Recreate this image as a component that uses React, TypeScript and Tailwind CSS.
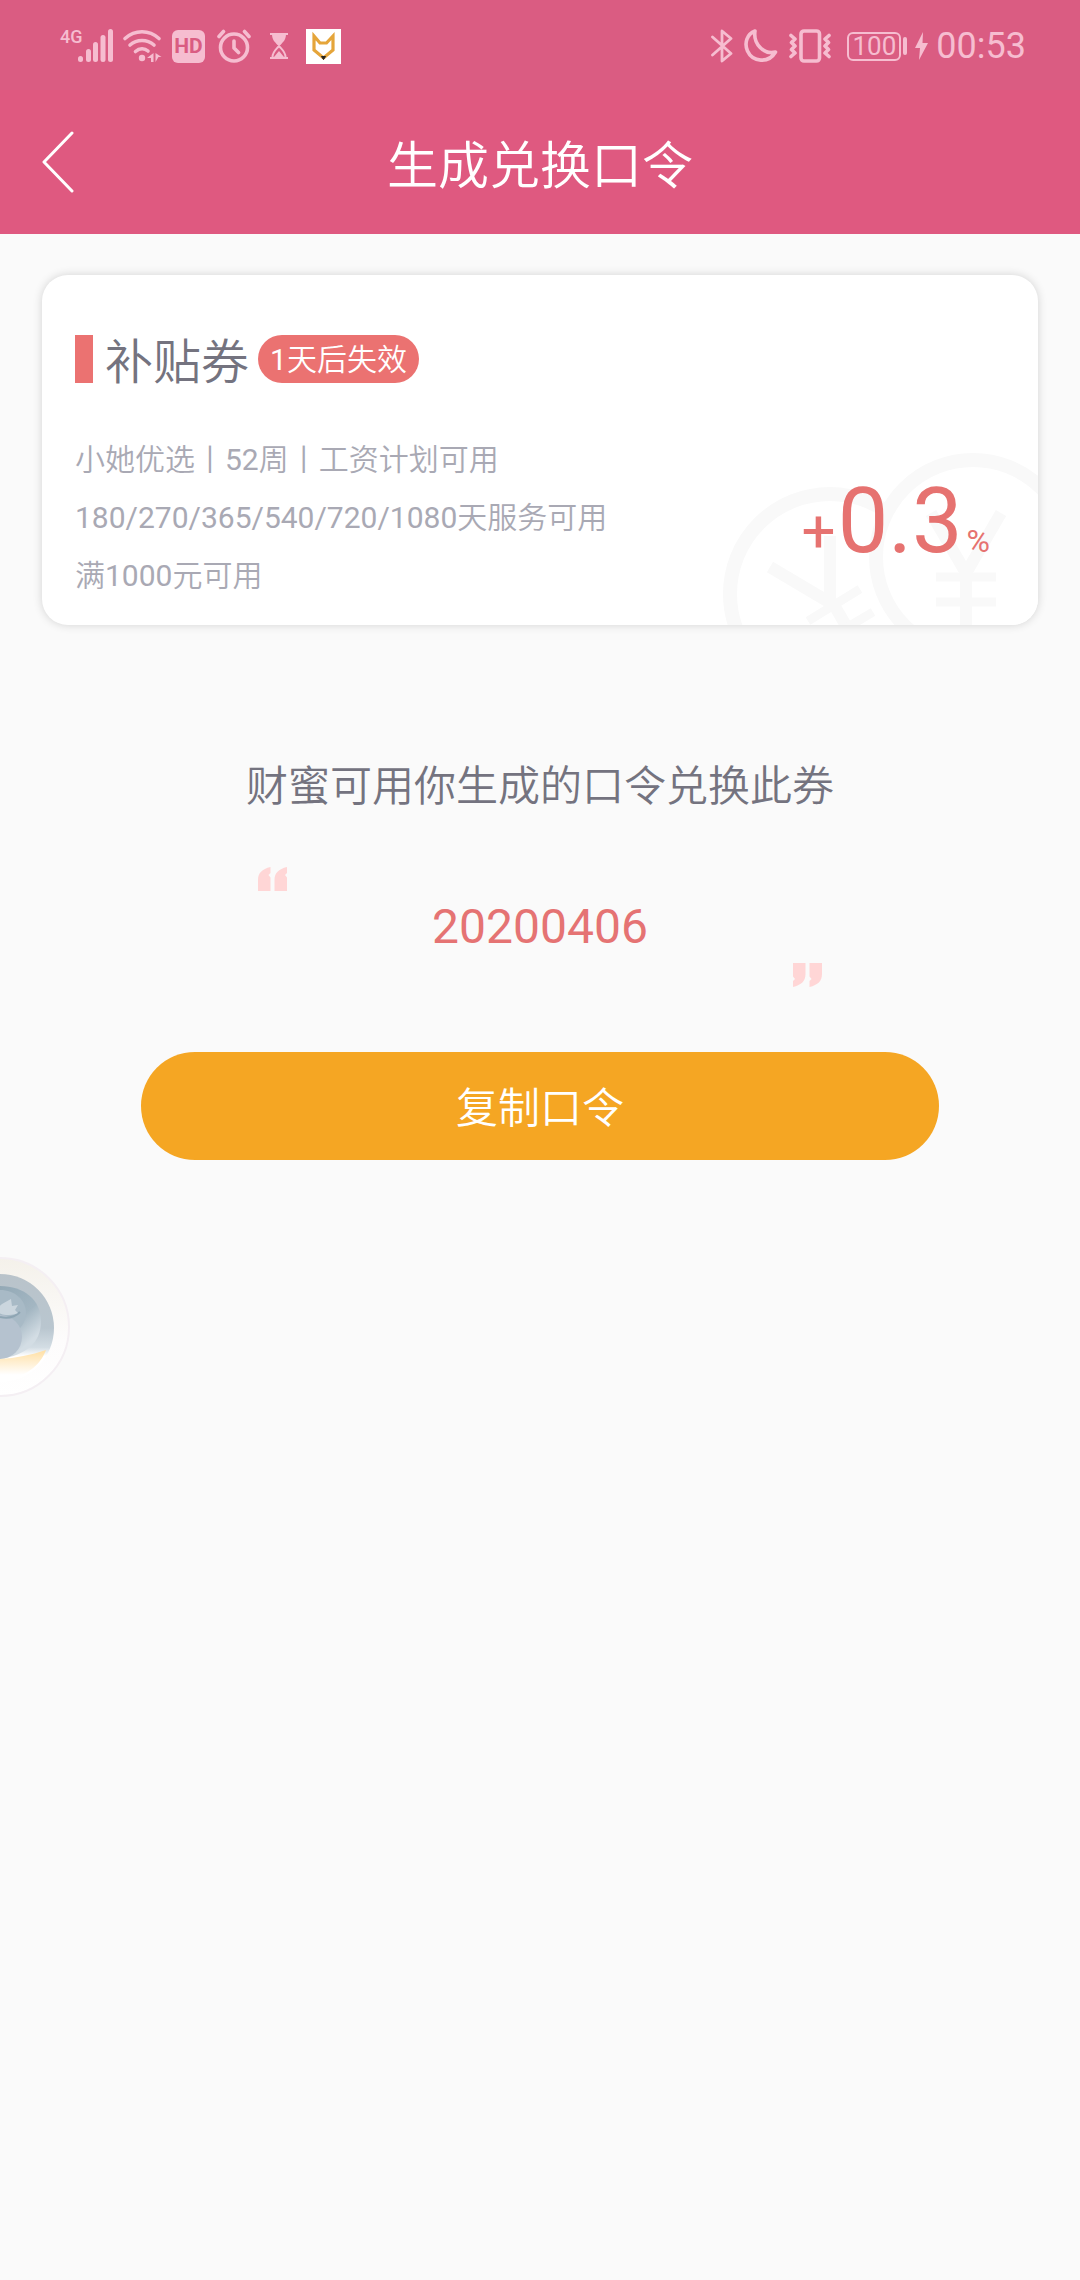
import React, { useState } from "react";

type Coupon = {
  title: string;
  expiry: string;
  rules: string[];
  rate: string;
  code: string;
};

const coupon: Coupon = {
  title: "补贴券",
  expiry: "1天后失效",
  rules: [
    "小她优选丨52周丨工资计划可用",
    "180/270/365/540/720/1080天服务可用",
    "满1000元可用",
  ],
  rate: "0.3",
  code: "20200406",
};

function StatusBar() {
  return (
    <div className="flex h-[90px] items-center justify-between bg-[#da5c82] pt-0.5 pr-[54px] pl-[60px] text-[#f6bdd0]">
      <div className="flex items-center">
        <div className="flex items-start">
          <span className="w-[18px] text-[18px] leading-4 font-medium">4G</span>
          <svg width="36" height="34" viewBox="0 0 36 34" fill="currentColor">
            <rect x="0" y="27" width="5" height="6" rx="2.5" />
            <rect x="8" y="20" width="5" height="13" rx="2.5" />
            <rect x="15" y="13" width="5" height="20" rx="2.5" />
            <rect x="22.500" y="6" width="5" height="27" rx="2.500" />
            <rect x="30" y="0" width="5" height="33" rx="2.5" />
          </svg>
        </div>
        <svg className="ml-2" width="40" height="34" viewBox="0 0 40 34" fill="none" stroke="currentColor" strokeWidth="3.6" strokeLinecap="round">
          <path d="M3 9.500C13 .5 27 .5 37 9.500" />
          <path d="M8 16c7-6 17-6 24 0" />
          <path d="M13.500 22.500c4-3.500 9-3.500 12.500-.5" />
          <circle cx="20" cy="29" r="3.2" fill="currentColor" stroke="none" />
          <path d="M31.500 24v9H29v-4h-4zM33.500 24l6 4h-3l-3 5z" fill="currentColor" stroke="none" />
        </svg>
        <span className="ml-2.5 flex h-[33px] w-[33px] items-center justify-center rounded-md bg-[#f6bdd0] text-[21px] leading-none font-bold text-[#da5c82]">
          HD
        </span>
        <svg className="ml-3" width="34" height="34" viewBox="0 0 34 34" fill="none" stroke="currentColor" strokeWidth="3.6" strokeLinecap="round" strokeLinejoin="round">
          <circle cx="17" cy="18.500" r="13.500" />
          <path d="M17 12v7l4.500 4.500M2 7.500l4.500-5M32 7.500l-4.500-5" />
        </svg>
        <svg className="ml-[18px]" width="20" height="26" viewBox="0 0 20 26" fill="none" stroke="currentColor" strokeWidth="2">
          <path d="M1 1h18M1 25h18" />
          <path d="M3 1h14c0 6-3 8-5.500 11h-3C6 9 3 7 3 1z" fill="currentColor" stroke="none" />
          <path d="M3.500 24c0-5 3-7 6.500-11 3.500 4 6.500 6 6.500 11" />
          <path d="M5 24l5-6 5 6z" fill="currentColor" stroke="none" />
        </svg>
        <svg className="ml-[17px]" width="35" height="35" viewBox="0 0 35 35">
          <rect width="35" height="35" fill="#fff" />
          <path d="M8 7l6 7h6.500l6.500-7v14l-9.500 8L8 21z" fill="none" stroke="#e5a53a" strokeWidth="3.200" />
          <path d="M15.500 27.500h4l-2 3z" fill="#222" stroke="#222" />
        </svg>
      </div>

      <div className="flex items-center">
        <svg width="22" height="34" viewBox="0 0 22 34" fill="none" stroke="currentColor" strokeWidth="2.800" strokeLinejoin="round" strokeLinecap="round">
          <path d="M1.500 8l18.500 16.500-9 7.500V2l9 7.500L1.500 26" />
        </svg>
        <svg className="ml-[11px]" width="34" height="34" viewBox="0 0 34 34" fill="none" stroke="currentColor" strokeWidth="3.600" strokeLinejoin="round">
          <path d="M11 2C3 5 0 14 3.500 22c5 11 21 13 28 1C20 26 9 15 11 2z" />
        </svg>
        <svg className="ml-[11px]" width="42" height="34" viewBox="0 0 42 34" fill="none" stroke="currentColor" strokeWidth="3.600" strokeLinecap="round" strokeLinejoin="round">
          <rect x="12" y="2" width="18.500" height="30" rx="3" />
          <path d="M2 6.500l4 3.500-3.500 3.500L6 17l-3.500 3.500L6 24l-4 3.500M40 6.500L36 10l3.500 3.500L36 17l3.500 3.500L36 24l4 3.500" />
        </svg>
        <span className="ml-4 flex h-[29px] w-[54px] items-center justify-center rounded-md border-2 border-[#f6bdd0] text-[26px] leading-none">
          100
        </span>
        <span className="ml-0.5 h-[18px] w-1 rounded-full bg-[#f6bdd0]" />
        <svg className="ml-2" width="13" height="28" viewBox="0 0 13 28" fill="currentColor">
          <path d="M8 0L0 16h5l-1 12 9-17H7.500z" />
        </svg>
        <time className="ml-2 text-[36px] leading-none">00:53</time>
      </div>
    </div>
  );
}

function CoinMark() {
  return (
    <svg
      className="absolute right-0 bottom-0"
      width="320"
      height="175"
      viewBox="718 449 320 175"
      fill="none"
      stroke="#f9f9f9"
    >
      <circle cx="830" cy="593" r="100" strokeWidth="14" />
      <path d="M770 566l64 38M830 535v69M834 604l14 24" strokeWidth="12" />
      <path d="M808 620l52-32M821 642l52-31" strokeWidth="9" />
      <circle cx="973" cy="556" r="97" fill="#fff" strokeWidth="14" />
      <path d="M931 512l35 60 35-60M966 565v60" strokeWidth="12" />
      <path d="M936 576h60M936 601h60" strokeWidth="9" />
    </svg>
  );
}

function CouponCard({ title, expiry, rules, rate }: Omit<Coupon, "code">) {
  return (
    <section className="relative overflow-hidden rounded-[26px] bg-white pt-[60px] pr-12 pb-5 pl-[33px] shadow-[0_0_10px_rgba(0,0,0,0.16)]">
      <CoinMark />
      <div className="relative flex h-12 items-center">
        <span className="mr-3 h-12 w-[18px] bg-[#eb7271]" />
        <h2 className="pt-2 text-[48px] leading-none font-[350] text-[#74737f]">{title}</h2>
        <span className="ml-[9px] flex h-12 items-center rounded-full bg-[#eb7271] px-3 pt-0.5 text-[30px] leading-none text-white">
          {expiry}
        </span>
      </div>
      <div className="relative mt-12 flex items-end justify-between">
        <ul className="text-[30px] leading-[58px] text-[#a9a9b4]">
          {rules.map((rule) => (
            <li key={rule}>{rule}</li>
          ))}
        </ul>
        <p className="flex items-baseline pb-[38px] leading-none text-[#e67270]">
          <span className="mr-0.5 text-[60px]">+</span>
          <span className="text-[90px]">{rate}</span>
          <span className="ml-1 text-[32px]">%</span>
        </p>
      </div>
    </section>
  );
}

function Quote({ className }: { className: string }) {
  return (
    <svg className={className} width="29" height="24" viewBox="0 0 29 24" fill="#ffd6d6">
      <path d="M12.500 0v6l-2 2 2 2.500V24H0V13C0 6 4 2 12.500 0zM29 0v6l-2 2 2 2.500V24H16.500V13c0-7 4-11 12.500-13z" />
    </svg>
  );
}

function FloatingBall() {
  return (
    <button aria-label="助手" className="absolute top-[1257px] -left-[70px] h-[140px] w-[140px]">
      <svg width="140" height="140" viewBox="0 0 140 140">
        <defs>
          <linearGradient id="rim" x1="0" y1="0" x2="0" y2="1">
            <stop offset="0" stopColor="#f4f1ea" />
            <stop offset="0.6" stopColor="#fdfcfc" />
            <stop offset="1" stopColor="#ffffff" />
          </linearGradient>
          <linearGradient id="glass" x1="0" y1="0" x2="0" y2="1">
            <stop offset="0" stopColor="#b9c3ca" />
            <stop offset="0.5" stopColor="#b9c6cf" />
            <stop offset="0.68" stopColor="#d3dde4" />
            <stop offset="0.76" stopColor="#ffffff" />
          </linearGradient>
          <linearGradient id="shade" x1="0" y1="0" x2="0.5" y2="1">
            <stop offset="0" stopColor="#93a9b6" />
            <stop offset="0.55" stopColor="#a3b6c2" />
            <stop offset="0.9" stopColor="#d3dde4" />
          </linearGradient>
          <linearGradient id="glow" x1="0" y1="0" x2="0" y2="1">
            <stop offset="0" stopColor="#ffdfa3" />
            <stop offset="0.8" stopColor="#ffffff" />
          </linearGradient>
        </defs>
        <circle cx="70" cy="70" r="69" fill="url(#rim)" stroke="#f4eff3" strokeWidth="2" />
        <circle cx="70" cy="71" r="54" fill="url(#glass)" />
        <path d="M70 29c24 0 41 14 41 35 0 22-15 34-41 38z" fill="url(#shade)" />
        <path d="M70 33c15 0 26 10 26 23S84 80 70 80z" fill="#a8bac6" />
        <circle cx="70" cy="80" r="22" fill="#b5c2cf" />
        <path d="M70 60c9 2 15 0 20-5" fill="none" stroke="#8ea5b3" strokeWidth="2" />
        <path d="M66 52l6-5 9-5 1 7 6-1-3 5 3 3c-5 2-8 2-12 2-5 0-8-2-10-6z" fill="#cbd6de" />
        <path d="M70 102c16-1 31-4 46-9-6 16-20 27-46 31z" fill="url(#glow)" />
      </svg>
    </button>
  );
}

export default function App() {
  const [copied, setCopied] = useState(false);

  const handleCopy = () => {
    navigator.clipboard?.writeText(coupon.code);
    setCopied(true);
  };

  return (
    <div className="relative min-h-screen overflow-hidden bg-[#fafafa] font-['Roboto','Noto_Sans_CJK_SC_DemiLight','Noto_Sans_CJK_SC',sans-serif]">
      <StatusBar />
      <header className="grid h-36 grid-cols-[1fr_auto_1fr] items-center bg-[#df5980] px-[42px] text-white">
        <button aria-label="返回" className="justify-self-start">
          <svg width="32" height="62" viewBox="0 0 32 62" fill="none" stroke="currentColor" strokeWidth="3" strokeLinecap="round" strokeLinejoin="round">
            <path d="M30 2L2 31l28 29" />
          </svg>
        </button>
        <h1 className="pt-2 text-[51px] leading-none font-[350]">生成兑换口令</h1>
      </header>

      <main className="px-[42px] pt-[41px]">
        <CouponCard
          title={coupon.title}
          expiry={coupon.expiry}
          rules={coupon.rules}
          rate={coupon.rate}
        />

        <p className="mt-[132px] text-center text-[42px] leading-[60px] font-[350] text-[#74737f]">
          财蜜可用你生成的口令兑换此券
        </p>

        <div className="mx-auto mt-[50px] flex w-[564px] flex-col items-center">
          <Quote className="self-start" />
          <output className="my-3 text-[48px] leading-[48px] text-[#e57373]">{coupon.code}</output>
          <Quote className="rotate-180 self-end" />
        </div>

        <div className="mt-[65px] px-[99px]">
          <button
            onClick={handleCopy}
            aria-pressed={copied}
            className="h-[108px] w-full rounded-full bg-[#f5a623] pt-1.5 text-[42px] leading-none font-[350] text-white"
          >
            复制口令
          </button>
        </div>
      </main>

      <FloatingBall />
    </div>
  );
}
